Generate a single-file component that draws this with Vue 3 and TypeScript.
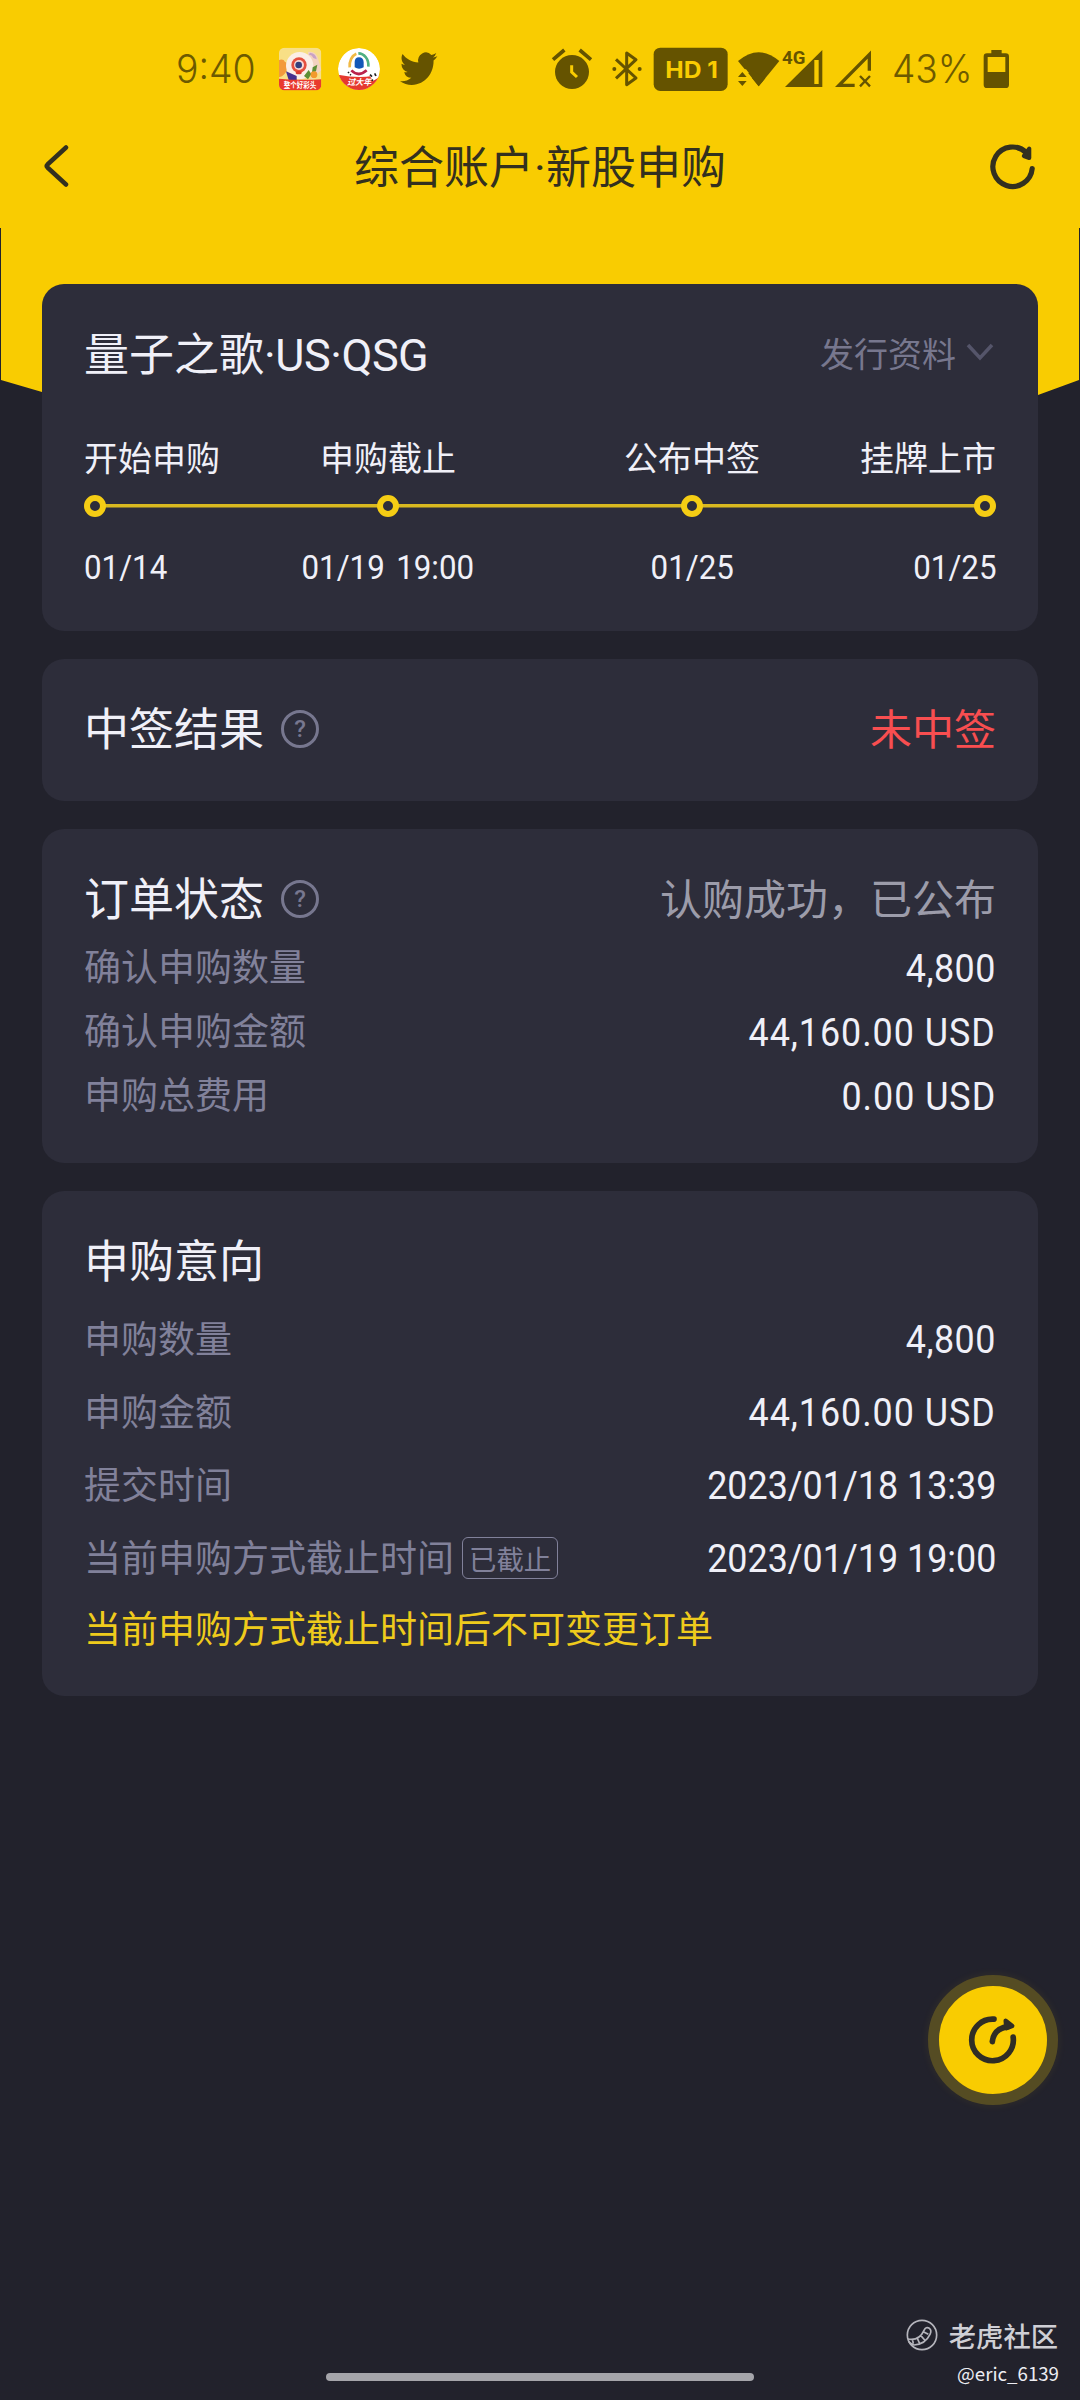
<script setup lang="ts">
interface Row {
  label: string
  value: string
  kind?: 'count' | 'money'
  tag?: string
}

const steps = [
  { label: '开始申购', date: '01/14' },
  { label: '申购截止', date: '01/19 19:00' },
  { label: '公布中签', date: '01/25' },
  { label: '挂牌上市', date: '01/25' },
]

const orderRows: Row[] = [
  { label: '确认申购数量', value: '4,800', kind: 'count' },
  { label: '确认申购金额', value: '44,160.00 USD', kind: 'money' },
  { label: '申购总费用', value: '0.00 USD', kind: 'money' },
]

const intentRows: Row[] = [
  { label: '申购数量', value: '4,800', kind: 'count' },
  { label: '申购金额', value: '44,160.00 USD', kind: 'money' },
  { label: '提交时间', value: '2023/01/18 13:39' },
  { label: '当前申购方式截止时间', value: '2023/01/19 19:00', tag: '已截止' },
]
</script>

<template>
  <div class="page">
    <div class="hero"></div>

    <header class="status">
      <div class="status-left">
        <svg viewBox="60 0 300 240" width="100" height="80">
          <text x="78" y="159" class="thin" font-size="117" textLength="239" lengthAdjust="spacingAndGlyphs">9:40</text>
        </svg>
        <svg viewBox="360 0 570 240" width="190" height="80">
          <defs>
            <clipPath id="sq"><rect x="387" y="53" width="127" height="128" rx="16" /></clipPath>
            <clipPath id="rd"><circle cx="627" cy="117" r="63" /></clipPath>
          </defs>
          <g clip-path="url(#sq)">
            <rect x="387" y="53" width="127" height="128" fill="#f8df86" />
            <path d="M387 90q14-4 18 6 10 0 6 20t-24 26z" fill="#f39a3c" />
            <path d="M474 66q24-4 30 20l10 34-30 30z" fill="#f3d2c0" />
            <circle cx="449" cy="107" r="41" fill="#fbeee6" />
            <path d="M480 68q18 2 20 20l-10-4q-4-10-14-10z" fill="#c9a2c4" />
            <circle cx="447" cy="105" r="23" fill="#e5503f" />
            <circle cx="447" cy="105" r="15" fill="#f7d9d6" />
            <circle cx="446" cy="105" r="10" fill="#35407c" />
            <path d="M408 124l32 14v12h-24z" fill="#46308e" />
            <ellipse cx="446" cy="128" rx="9" ry="5" fill="#d8392c" />
            <path d="M462 138l14-18 8 12-10 16zM488 112l14-8-4 20-12 4z" fill="#5d8f35" />
            <circle cx="492" cy="134" r="10" fill="#f39a2c" />
            <path d="M387 146q62 6 127 2v34H387z" fill="#e93a2e" />
            <text x="401" y="173" fill="#fff" font-size="23" font-weight="700" textLength="98" lengthAdjust="spacingAndGlyphs">整个好彩头</text>
          </g>
          <g clip-path="url(#rd)">
            <circle cx="627" cy="117" r="63" fill="#fff" />
            <path d="M599 112a28 38 0 0 1 20-41" fill="none" stroke="#f0b944" stroke-width="8" />
            <path d="M625 70a30 36 0 0 1 30 40" fill="none" stroke="#4fb083" stroke-width="8" />
            <path d="M604 121q22 22 46 0" fill="none" stroke="#b9234c" stroke-width="8" />
            <path d="M614 112V96q0-14 13-14t14 14v16q-14 8-27 0z" fill="#1257b8" />
            <path d="M563 134q60 12 104 4l24-6v50H563z" fill="#e5392f" />
            <path d="M658 134l8-5 6 8 12-10 6 12-12 9-10 5z" fill="#fff" />
            <path d="M660 134l6 6m8-10l4 8m-14 10l5 4m-75-26l3 3m3 4l3 2" stroke="#222" stroke-width="5" />
            <text x="592" y="166" fill="#fff" font-size="25" font-weight="700" font-style="italic" textLength="72" lengthAdjust="spacingAndGlyphs">过大年</text>
          </g>
          <path class="ink" transform="translate(750 56) scale(4.67 5)" d="M23.953 4.57a10 10 0 01-2.825.775 4.958 4.958 0 002.163-2.723c-.951.555-2.005.959-3.127 1.184a4.92 4.92 0 00-8.384 4.482C7.69 8.095 4.067 6.13 1.64 3.162a4.822 4.822 0 00-.666 2.475c0 1.71.87 3.213 2.188 4.096a4.904 4.904 0 01-2.228-.616v.06a4.923 4.923 0 003.946 4.827 4.996 4.996 0 01-2.212.085 4.936 4.936 0 004.604 3.417 9.867 9.867 0 01-6.102 2.105c-.39 0-.779-.023-1.17-.067a13.995 13.995 0 007.557 2.209c9.053 0 13.998-7.496 13.998-13.985 0-.21 0-.42-.015-.63A9.935 9.935 0 0024 4.59z" />
        </svg>
      </div>
      <svg class="status-right" viewBox="0 0 1500 240" width="500" height="80">
        <!-- alarm -->
        <circle class="ink" cx="126" cy="126" r="51" />
        <path class="stroke" d="M69 89l34-29M183 89l-34-29" stroke-width="11" />
        <path d="M125 106v20l16 15" fill="none" stroke="#f9cc01" stroke-width="9" />
        <!-- bluetooth -->
        <path class="stroke" d="M258 88l60 56-28 20V69l28 20-60 56" stroke-width="9" stroke-linejoin="round" />
        <circle class="ink" cx="253" cy="117" r="6" />
        <circle class="ink" cx="329" cy="117" r="6" />
        <!-- HD badge -->
        <rect class="ink" x="371" y="53" width="222" height="130" rx="20" />
        <text x="406" y="143" fill="#f9cc01" class="badge" font-size="67" textLength="158" lengthAdjust="spacingAndGlyphs">HD 1</text>
        <!-- wifi -->
        <path class="ink" d="M624 93q62-53 124 0l-62 76z" />
        <path d="M616 118h32l18 22v36h-50z" fill="#f9cc01" />
        <path class="ink" d="M624 141l13-15 13 15zM624 153h26l-13 15z" />
        <path class="ink" d="M655 130l31 39 20-24-40-25z" />
        <!-- signal 1 -->
        <path class="ink" d="M765 171L877 60v111z" />
        <rect x="853" y="90" width="13" height="72" fill="#f9cc01" />
        <text x="756" y="102" class="ink net" font-size="53" stroke="#f9cc01" stroke-width="6" paint-order="stroke" textLength="70" lengthAdjust="spacingAndGlyphs">4G</text>
        <!-- signal 2 -->
        <path class="stroke" d="M974 166h-47l91-92v48" stroke-width="10" />
        <path class="stroke" d="M990 138l30 31m0-31l-30 31" stroke-width="7" />
        <text x="1086" y="159" class="thin" font-size="117" textLength="242" lengthAdjust="spacingAndGlyphs">43%</text>
        <!-- battery -->
        <path class="ink" fill-rule="evenodd" d="M1384 60h31v10h12q10 0 10 10v84q0 10-10 10h-56q-10 0-10-10V80q0-10 10-10h13zM1373 81v45h53V81z" />
      </svg>
    </header>

    <nav class="nav">
      <svg class="back" viewBox="0 0 26 44" width="26" height="44">
        <path d="M23 3.500L4.500 20.500q-1.500 1.500 0 3L23 40.500" />
      </svg>
      <h1>综合账户<span class="mid">·</span>新股申购</h1>
      <svg class="reload" viewBox="0 0 48 48" width="48" height="48">
        <path d="M43.200 26.500A19.700 19.700 0 1 1 37.500 10.800" />
        <path d="M40.300 6.500v9.500l-5.500-2z" class="tip" />
      </svg>
    </nav>

    <main>
      <section class="card">
        <div class="head">
          <h2 class="stock">量子之歌<span class="latin">·US·QSG</span></h2>
          <a class="more">发行资料
            <svg viewBox="0 0 28 18" width="28" height="18"><path d="M2 2l12 13L26 2" /></svg>
          </a>
        </div>
        <div class="timeline labels">
          <div v-for="s in steps" :key="s.label" class="cell">{{ s.label }}</div>
        </div>
        <div class="timeline track">
          <div v-for="s in steps" :key="s.label" class="cell"><i class="dot"></i></div>
        </div>
        <div class="timeline dates">
          <div v-for="s in steps" :key="s.label" class="cell"><span class="date">{{ s.date }}</span></div>
        </div>
      </section>

      <section class="card result">
        <div class="head">
          <h2>中签结果</h2>
          <span class="help">?</span>
          <span class="state red">未中签</span>
        </div>
      </section>

      <section class="card order">
        <div class="head">
          <h2>订单状态</h2>
          <span class="help">?</span>
          <span class="state">认购成功，已公布</span>
        </div>
        <div v-for="r in orderRows" :key="r.label" class="row">
          <span>{{ r.label }}</span>
          <span class="value" :class="r.kind">{{ r.value }}</span>
        </div>
      </section>

      <section class="card intent">
        <div class="head"><h2>申购意向</h2></div>
        <div v-for="r in intentRows" :key="r.label" class="row">
          <span>{{ r.label }}</span>
          <span v-if="r.tag" class="tag">{{ r.tag }}</span>
          <span class="value" :class="r.kind">{{ r.value }}</span>
        </div>
        <p class="note">当前申购方式截止时间后不可变更订单</p>
      </section>
    </main>

    <button class="fab">
      <svg viewBox="170 190 160 160" width="53.300" height="53.300">
        <path d="M254 208.500A62.500 62.500 0 1 0 311.500 262" />
        <path d="M249 276q4-40 50-46" />
        <path d="M289 213l20 16-18 7z" class="tip" />
      </svg>
    </button>

    <footer class="credit">
      <div class="brand">
        <svg viewBox="78 90 96 96" width="32" height="32">
          <circle cx="126" cy="138" r="44" />
          <path d="M84 150q34 6 48-26 6-12 16-6 8 6 2 18-14 30-48 32-8-2-16-10M97 150l3 14M111 146l8 18M122 139l12 14M130 128l15 8" />
        </svg>
        <span>老虎社区</span>
      </div>
      <div class="user">@eric_6139</div>
    </footer>
    <div class="home"></div>
  </div>
</template>

<style>
body {
  background: #22222c;
}
</style>

<style scoped>
.page {
  position: relative;
  width: 1080px;
  height: 2400px;
  overflow: hidden;
  background: #22222c;
  color: #f0f0f8;
  font-family: 'Noto Sans CJK SC', sans-serif;
}
.hero {
  position: absolute;
  inset: 0 0 auto 0;
  height: 440px;
  background: #f9cc01;
  clip-path: polygon(0 0, 100% 0, 100% 228px, 1079px 228px, 1079px 380px, 1038px 395px, 900px 430px, 180px 430px, 42px 392px, 1px 380px, 1px 228px, 0 228px);
}
.status {
  position: relative;
  display: flex;
  justify-content: space-between;
  height: 80px;
  padding: 30px 50px 0 170px;
}
.status-left {
  display: flex;
}
.ink {
  fill: #655300;
}
.stroke {
  fill: none;
  stroke: #655300;
}
.thin {
  fill: #6d5a00;
  font-family: Inter, sans-serif;
  font-weight: 300;
}
.badge {
  font-family: Inter, sans-serif;
  font-weight: 700;
}
.net {
  font-family: Roboto, sans-serif;
  font-weight: 700;
}
.nav {
  position: relative;
  display: flex;
  align-items: center;
  justify-content: space-between;
  height: 112px;
  padding: 0 43px;
  color: #33301f;
}
.nav h1 {
  margin: 2px 0 0;
  font-size: 45px;
  line-height: 60px;
  font-weight: 400;
}
.mid {
  font-family: Roboto, sans-serif;
}
.back {
  margin-right: 22px;
}
.nav path {
  fill: none;
  stroke: #33301f;
  stroke-width: 4.500;
  stroke-linecap: round;
  stroke-linejoin: round;
}
.nav .reload path {
  stroke-width: 5.200;
}
.nav .reload .tip {
  fill: #33301f;
  stroke-width: 4;
}
main {
  position: relative;
  display: flex;
  flex-direction: column;
  gap: 28px;
  padding: 62px 42px 0;
}
.card {
  box-sizing: border-box;
  padding: 32px 42px 39px;
  border-radius: 22px;
  background: #2d2d3a;
}
.card.result,
.card.order {
  padding-bottom: 38px;
}
.card.intent {
  padding-bottom: 34px;
}
.head {
  display: flex;
  align-items: center;
  height: 72px;
}
.head h2 {
  margin: 0;
  font-size: 45px;
  line-height: 60px;
  font-weight: 400;
}
.head .stock {
  margin-top: 3px;
}
.latin {
  font-family: Roboto, 'Noto Sans CJK SC', sans-serif;
  letter-spacing: -0.500px;
}
.more {
  display: flex;
  align-items: center;
  gap: 10px;
  margin-left: auto;
  padding-right: 2px;
  color: #77778e;
  font-size: 34px;
}
.more path {
  fill: none;
  stroke: #55556a;
  stroke-width: 3.500;
}
.timeline {
  display: flex;
  font-size: 34px;
  line-height: 48px;
}
.cell {
  display: flex;
  flex: 2 0 0;
  justify-content: center;
  white-space: nowrap;
}
.cell:first-child {
  flex-grow: 1;
  justify-content: flex-start;
}
.cell:last-child {
  flex-grow: 1;
  justify-content: flex-end;
}
.labels {
  margin-top: 45px;
}
.track {
  margin-top: 14px;
  background: linear-gradient(#d9b920, #d9b920) center / calc(100% - 22px) 3.500px no-repeat;
}
.dot {
  box-sizing: border-box;
  width: 22px;
  height: 22px;
  border: 6px solid #f5cd14;
  border-radius: 50%;
  background: #2d2d3a;
}
.dates {
  height: 49px;
  margin-top: 26px;
  font-family: Roboto, sans-serif;
  word-spacing: 4px;
}
/* condensed numerals */
.date,
.value {
  transform: scaleX(0.92);
}
.cell:first-child .date {
  transform-origin: left;
}
.cell:last-child .date {
  transform-origin: right;
}
.help {
  display: flex;
  align-items: center;
  justify-content: center;
  box-sizing: border-box;
  width: 38px;
  height: 38px;
  margin: 4px 0 0 17px;
  border: 3px solid #77778f;
  border-radius: 50%;
  color: #77778f;
  font: 500 24px Roboto, sans-serif;
}
.state {
  margin-left: auto;
  color: #9c9caa;
  font-size: 42px;
  line-height: 60px;
}
.state.red {
  color: #f84e50;
}
.row {
  display: flex;
  align-items: center;
  height: 64px;
  color: #81819a;
  font-size: 37px;
  line-height: 50px;
}
.intent .row {
  height: 73px;
}
.intent .head {
  height: 71px;
  margin-bottom: 6px;
}
.value {
  margin: 7px 0 0 auto;
  color: #f0f0f8;
  font-family: Roboto, sans-serif;
  font-size: 39px;
  transform-origin: right;
}
.value.count {
  letter-spacing: 0.500px;
}
.value.money {
  letter-spacing: 1.050px;
}
.tag {
  box-sizing: border-box;
  height: 42px;
  margin: 4px 0 0 8px;
  padding: 0 6px;
  border: 1px solid #81819a;
  border-radius: 6px;
  font-size: 27.400px;
  line-height: 40px;
}
.note {
  margin: 0;
  color: #efcb1c;
  font-size: 37px;
  line-height: 70px;
}
.fab {
  position: absolute;
  left: 928px;
  top: 1975px;
  display: flex;
  align-items: center;
  justify-content: center;
  width: 130px;
  height: 130px;
  padding: 0;
  border: 11.500px solid #554c23;
  border-radius: 50%;
  background: #f9cc01;
  box-shadow: 0 0 10px rgba(250, 205, 0, 0.08);
}
.fab path {
  fill: none;
  stroke: #302d25;
  stroke-width: 17;
  stroke-linecap: round;
  stroke-linejoin: round;
}
.fab .tip {
  fill: #302d25;
  stroke-width: 13;
}
.credit {
  position: absolute;
  right: 21px;
  top: 2314px;
  display: flex;
  flex-direction: column;
  align-items: flex-end;
}
.brand {
  display: flex;
  align-items: center;
  gap: 11px;
  padding-right: 1px;
  color: #cfcfd5;
  font-size: 27.300px;
  font-weight: 500;
  line-height: 42px;
}
.brand path,
.brand circle {
  fill: none;
  stroke: #b5b5bc;
  stroke-width: 5;
}
.user {
  color: #ededf2;
  font-size: 18.700px;
  line-height: 34px;
}
.home {
  position: absolute;
  left: 326px;
  bottom: 19px;
  width: 428px;
  height: 8px;
  border-radius: 4px;
  background: #a5a5aa;
}
</style>
